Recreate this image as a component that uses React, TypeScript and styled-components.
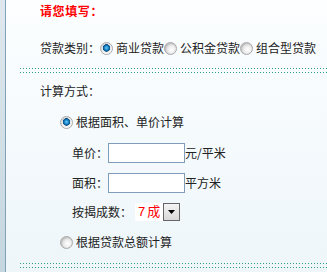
import React from 'react';
import styled, { createGlobalStyle } from 'styled-components';

const GlobalStyle = createGlobalStyle`
	html, body {
		margin: 0;
		padding: 0;
		background: #ffffff;
	}
	body {
		font-family: 'Noto Sans CJK SC', 'Noto Sans', sans-serif;
		font-size: 12px;
		color: #222222;
	}
`;

const Frame = styled.div`
	display: flex;
	width: 327px;
	height: 272px;
	overflow: hidden;
`;

const SideStrip = styled.div`
	width: 5px;
	flex-shrink: 0;
	background: linear-gradient(180deg, #dfe8ee 0%, #c4d6df 100%);
	border-right: 1px solid #7fa2b6;
`;

const Panel = styled.div`
	flex: 1;
	display: flex;
	flex-direction: column;
	background: linear-gradient(180deg, #fcfeff 0%, #eef6fa 100%);
`;

const Row = styled.div<{ $indent?: number; $top?: number }>`
	display: flex;
	align-items: center;
	height: 22px;
	padding-left: ${({ $indent }) => $indent ?? 34}px;
	margin-top: ${({ $top }) => $top ?? 0}px;
	white-space: nowrap;
	line-height: 22px;
`;

const Title = styled.span`
	color: #ff0000;
	font-weight: bold;
	font-size: 12px;
	letter-spacing: 0.6px;
`;

const Label = styled.span<{ $width?: number }>`
	display: inline-block;
	width: ${({ $width }) => ($width ? `${$width}px` : 'auto')};
`;

const Dots = styled.div<{ $top: number }>`
	height: 5px;
	margin-top: ${({ $top }) => $top}px;
	margin-left: 14px;
	background-image: repeating-linear-gradient(to right, #2f9a86 0 1px, transparent 1px 3px),
		repeating-linear-gradient(to right, #2f9a86 0 1px, transparent 1px 3px);
	background-size: 100% 1px, 100% 1px;
	background-position: 0 0, 0 4px;
	background-repeat: no-repeat;
`;

const Radio = styled.span<{ $checked?: boolean }>`
	display: inline-block;
	box-sizing: border-box;
	width: 13px;
	height: 13px;
	border-radius: 50%;
	border: 1px solid #a8a8a8;
	margin-right: 3px;
	flex-shrink: 0;
	background: ${({ $checked }) =>
		$checked
			? 'radial-gradient(circle at 50% 45%, #6fd0ff 0, #1a86c8 2px, #0b4f86 3.5px, #e9e9e9 4px, #ffffff 6px)'
			: 'radial-gradient(circle at 60% 60%, #ffffff 0, #f1f1f1 3px, #d6d6d6 6px)'};
	box-shadow: inset 1px 1px 1px rgba(0, 0, 0, 0.1);
`;

const TextInput = styled.input`
	box-sizing: border-box;
	width: 77px;
	height: 20px;
	margin: 0;
	padding: 0 2px;
	border: 1px solid #7f9db9;
	background: #ffffff;
	font: inherit;
	outline: none;
`;

const SelectBox = styled.div`
	display: flex;
	align-items: center;
	height: 18px;
	margin-left: 3px;
`;

const SelectValue = styled.span`
	display: inline-block;
	width: 28px;
	height: 18px;
	line-height: 18px;
	padding-left: 3px;
	box-sizing: border-box;
	background: #ffffff;
	color: #ff0000;
	font-size: 13px;
	letter-spacing: 2px;
	font-family: 'Liberation Sans', 'Noto Sans CJK SC', sans-serif;
`;

const SelectButton = styled.span`
	box-sizing: border-box;
	width: 17px;
	height: 18px;
	border: 1px solid #666666;
	background: linear-gradient(180deg, #f4f4f4 0%, #d8d8d8 100%);
	display: flex;
	align-items: center;
	justify-content: center;
`;

const Caret = () => (
	<svg width="7" height="4" viewBox="0 0 7 4">
		<polygon points="0,0 7,0 3.5,4" fill="#000" />
	</svg>
);

export default function App() {
	return (
		<>
			<GlobalStyle />
			<Frame>
				<SideStrip />
				<Panel>
					<Row>
						<Title>请您填写：</Title>
					</Row>
					<Row $top={15}>
						<Label>贷款类别：</Label>
						<Radio $checked />
						<span>商业贷款</span>
						<Radio />
						<span>公积金贷款</span>
						<Radio />
						<span>组合型贷款</span>
					</Row>
					<Dots $top={9} />
					<Row $top={7}>计算方式：</Row>
					<Row $indent={54} $top={9}>
						<Radio $checked />
						<span>根据面积、单价计算</span>
					</Row>
					<Row $indent={66} $top={9}>
						<Label $width={36}>单价：</Label>
						<TextInput />
						<span>元/平米</span>
					</Row>
					<Row $indent={66} $top={8}>
						<Label $width={36}>面积：</Label>
						<TextInput />
						<span>平方米</span>
					</Row>
					<Row $indent={66} $top={7}>
						<Label>按揭成数：</Label>
						<SelectBox>
							<SelectValue>7成</SelectValue>
							<SelectButton>
								<Caret />
							</SelectButton>
						</SelectBox>
					</Row>
					<Row $indent={54} $top={8}>
						<Radio />
						<span>根据贷款总额计算</span>
					</Row>
					<Dots $top={10} />
				</Panel>
			</Frame>
		</>
	);
}
